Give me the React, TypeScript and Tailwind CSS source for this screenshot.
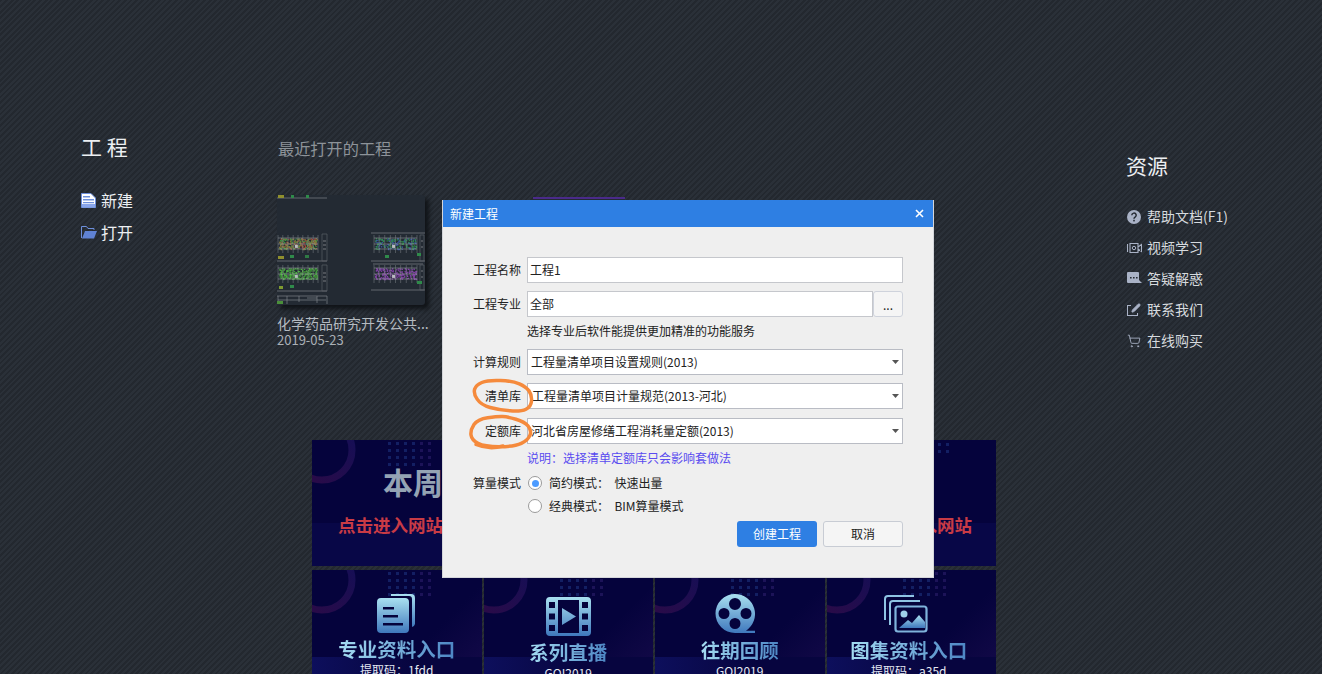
import type { ReactNode } from 'react';
import { Pencil, ShoppingCart } from 'lucide-react';

// seeded noise so the CAD thumbnail stays the same between renders
function noise(seed: number, count: number, x: number, y: number, w: number, h: number) {
  const out: { x: number; y: number }[] = [];
  let s = seed;
  for (let i = 0; i < count; i++) {
    s = (s * 9301 + 49297) % 233280;
    const a = s / 233280;
    s = (s * 9301 + 49297) % 233280;
    const b = s / 233280;
    out.push({ x: x + a * w, y: y + b * h });
  }
  return out;
}

function Plan({ x, y, w, h, colors, seed }: { x: number; y: number; w: number; h: number; colors: string[]; seed: number }) {
  const verticals = [0, 0.12, 0.25, 0.38, 0.5, 0.62, 0.75, 0.88, 1];
  return (
    <g>
      {colors.map((c, i) =>
        noise(seed + i * 17, 90, x + 1, y + 3, w - 2, h - 7).map((p, j) => (
          <rect key={i + '-' + j} x={p.x} y={p.y} width="1.3" height="1.3" fill={c} />
        ))
      )}
      <path d={'M' + x + ' ' + (y + 3) + 'h' + w + 'M' + x + ' ' + (y + h / 2) + 'h' + w + 'M' + x + ' ' + (y + h - 4) + 'h' + w} stroke="#a9adb2" strokeWidth="0.5" />
      {verticals.map((v) => (
        <path key={v} d={'M' + (x + v * w) + ' ' + y + 'v' + h} stroke="#7f8489" strokeWidth="0.5" />
      ))}
      <rect x={x + w * 0.42} y={y + h * 0.55} width="3" height="3" fill="#b9bcc0" />
    </g>
  );
}

function CadThumb() {
  return (
    <svg viewBox="0 0 148 110" className="w-[148px] h-[110px]">
      <path d="M0 3h50M0 66h50M0 96h50M94 38h54M94 66h54M96 69h50M94 95h54M0 101h50" stroke="#62676e" strokeWidth="1" />
      <path d="M45 39h5v27h-5zM45 70h5v26h-5zM143 40h4v26h-4zM143 70h4v25h-4z" fill="none" stroke="#5a5f66" strokeWidth="0.7" />
      <path d="M46 46h3M46 50h3M46 54h3M46 78h3M46 82h3M46 86h3M144 46h2M144 52h2M144 76h2M144 82h2" stroke="#8d9196" strokeWidth="0.8" />
      <Plan x={1} y={40} w={40} h={18} colors={['#a8453c', '#3f9a45', '#8a7a3c']} seed={11} />
      <Plan x={1} y={70} w={40} h={18} colors={['#3ea83c', '#4dbb3d', '#3e7f3a']} seed={29} />
      <Plan x={97} y={40} w={43} h={18} colors={['#3b5ca8', '#2f8a4a']} seed={53} />
      <Plan x={97} y={70} w={43} h={18} colors={['#8a44b0', '#7d3fa0']} seed={71} />
      {[
        [1, 0, 6, '#8f8f2e'], [14, 0, 3, '#2f8a4a'], [29, 0, 3, '#2f8a4a'], [1, 61, 6, '#8f8f2e'], [13, 60, 4, '#2f8a4a'],
        [28, 60, 4, '#2f7a44'], [2, 91, 4, '#7f9a30'], [13, 90, 4, '#2f8a4a'], [140, 58, 4, '#2f8a4a'], [140, 86, 5, '#2f8a4a'], [108, 60, 4, '#2f8a4a'],
      ].map(([x, y, w, c], i) => (
        <rect key={i} x={x as number} y={y as number} width={w as number} height="3" fill={c as string} />
      ))}
      <path d="M1 101v8M10 101v8M22 101v6M30 103h10M40 101v7M50 101v8M1 105h48" stroke="#80858b" strokeWidth="0.7" />
      <rect x="0" y="106" width="6" height="3" fill="#4a8f3a" />
    </svg>
  );
}

function Grad({ id }: { id: string }) {
  return (
    <defs>
      <linearGradient id={id} x1="0" y1="0" x2="0" y2="1">
        <stop offset="0" stopColor="#a9e0f0" />
        <stop offset="1" stopColor="#3f78bd" />
      </linearGradient>
    </defs>
  );
}

function DocsIcon() {
  return (
    <svg width="40" height="40" viewBox="0 0 40 40">
      <Grad id="g-docs" />
      <path d="M14 1h20a4 4 0 0 1 4 4v26a4 4 0 0 1-3 3V6a3 3 0 0 0-3-3H14z" fill="url(#g-docs)" />
      <path fillRule="evenodd" d="M4 5h24a4 4 0 0 1 4 4v27a4 4 0 0 1-4 4H4a4 4 0 0 1-4-4V9a4 4 0 0 1 4-4zM6 14v2.5h11V14zM6 22v2.5h15V22zM6 30v2.5h20V30z" fill="url(#g-docs)" />
    </svg>
  );
}

function FilmIcon() {
  return (
    <svg width="45" height="39" viewBox="0 0 45 39">
      <Grad id="g-film" />
      <path fillRule="evenodd" d="M4 0h37a4 4 0 0 1 4 4v31a4 4 0 0 1-4 4H4a4 4 0 0 1-4-4V4a4 4 0 0 1 4-4zM3 5v6h6V5zM3 16.5v6h6v-6zM3 28v6h6v-6zM36 5v6h6V5zM36 16.5v6h6v-6zM36 28v6h6v-6zM12 3v33h21V3zM16 11l14 8.5-14 8.5z" fill="url(#g-film)" />
    </svg>
  );
}

function ReelIcon() {
  return (
    <svg width="40" height="41" viewBox="0 0 40 41">
      <Grad id="g-reel" />
      <path fillRule="evenodd" d="M20 0a20 20 0 0 1 11 36.7h9V39H20A19.5 19.5 0 0 1 20 0zM20 4a6 6 0 1 0 0 12 6 6 0 0 0 0-12zM9 14a5.5 5.5 0 1 0 0 11 5.5 5.5 0 0 0 0-11zM31 14a5.5 5.5 0 1 0 0 11 5.5 5.5 0 0 0 0-11zM20 24a5.5 5.5 0 1 0 0 11 5.5 5.5 0 0 0 0-11z" fill="url(#g-reel)" />
    </svg>
  );
}

function GalleryIcon() {
  return (
    <svg width="44" height="38" viewBox="0 0 44 38">
      <Grad id="g-gal" />
      <path d="M30 1H4a3 3 0 0 0-3 3v21M36 6H9a3 3 0 0 0-3 3v21" fill="none" stroke="#8fc4e4" strokeWidth="2" />
      <rect x="11.5" y="11.5" width="31" height="25" rx="2.5" fill="none" stroke="#7fb3dc" strokeWidth="2.2" />
      <circle cx="20" cy="19" r="3.5" fill="#9ed0ea" />
      <path d="M15 33l9-8 4 3 7-8 6 7v6z" fill="url(#g-gal)" />
    </svg>
  );
}

function BannerDecor() {
  const dots = [0, 1, 2, 3, 4, 5].flatMap((c) => [0, 1, 2, 3].map((r) => ({ c, r })));
  return (
    <>
      <svg className="absolute left-0 top-0" width="50" height="50" viewBox="0 0 50 50">
        <defs>
          <linearGradient id="g-ring" x1="1" y1="0" x2="0" y2="1">
            <stop offset="0" stopColor="#120f58" />
            <stop offset="1" stopColor="#2e0a45" />
          </linearGradient>
        </defs>
        <circle cx="10" cy="10" r="30" fill="none" stroke="url(#g-ring)" strokeWidth="7" />
      </svg>
      <svg className="absolute left-[76px] top-0" width="50" height="28" viewBox="0 0 50 28">
        {dots.map((d) => (
          <rect key={d.c + '-' + d.r} x={d.c * 8} y={d.r * 7 + 2} width="3" height="3" fill={d.c > 3 ? '#1c1358' : '#131f63'} />
        ))}
      </svg>
    </>
  );
}

const tiles: { title: string; sub: string; icon: ReactNode; mt: string; shift: string; iconShift: string }[] = [
  { title: '专业资料入口', sub: '提取码：1fdd', icon: <DocsIcon />, mt: 'mt-[23px]', shift: '', iconShift: '' },
  { title: '系列直播', sub: 'GOI2019', icon: <FilmIcon />, mt: 'mt-[26px]', shift: '', iconShift: '' },
  { title: '往期回顾', sub: 'GOI2019', icon: <ReelIcon />, mt: 'mt-[24px]', shift: '', iconShift: 'mr-[9px]' },
  { title: '图集资料入口', sub: '提取码：a35d', icon: <GalleryIcon />, mt: 'mt-[24px]', shift: 'pr-[5px]', iconShift: 'mr-[5px]' },
];

function Tile({ title, sub, icon, mt, shift, iconShift }: { title: string; sub: string; icon: ReactNode; mt: string; shift: string; iconShift: string }) {
  return (
    <div className="relative h-[126px] overflow-hidden bg-[linear-gradient(135deg,#05033c_62%,#170b4c_100%)]">
      <BannerDecor />
      <div className="absolute left-0 right-0 top-[87px] h-[40px] bg-[linear-gradient(90deg,#0d0f5c,#07053f_60%)]" />
      <div className={'relative flex flex-col items-center ' + mt + ' ' + shift}>
        <div className={'h-[40px] flex items-center ' + iconShift}>{icon}</div>
        <div className="mt-[2px] h-[28px] leading-[28px] text-[19.5px] font-bold whitespace-nowrap bg-linear-to-r from-[#a4dcf2] to-[#4d86c4] bg-clip-text text-transparent">
          {title}
        </div>
        <div className="text-[12px] leading-[14px] text-[#e4e8f2] whitespace-nowrap">{sub}</div>
      </div>
    </div>
  );
}

function FileIcon() {
  return (
    <svg width="15" height="15" viewBox="0 0 15 15">
      <path d="M0.5 0.5h9.5l4.500 4.500v9.500H0.5z" fill="#fff" stroke="#6d8fdc" />
      <path d="M1 11h13v3.5H1z" fill="#8aa6ea" />
      <path d="M2 3h7v1.5H2zM2 6h11v1.5H2zM2 9h11v1.2H2z" fill="#6d8fdc" />
    </svg>
  );
}

function FolderIcon() {
  return (
    <svg width="16" height="13" viewBox="0 0 16 13">
      <path d="M0.5 12V0.5h5l1.5 2h6v1.5" fill="none" stroke="#6d8fdc" />
      <path d="M1 12.5L4 5h12l-3 7.5z" fill="#5f82d4" />
    </svg>
  );
}

function HelpIcon() {
  return (
    <svg width="14" height="14" viewBox="0 0 14 14">
      <circle cx="7" cy="7" r="7" fill="#a9b2c6" />
      <path d="M4.8 5.3a2.2 2.2 0 1 1 3.3 1.9c-.7.4-1.1.8-1.1 1.5" fill="none" stroke="#252b33" strokeWidth="1.5" />
      <rect x="6.2" y="9.8" width="1.6" height="1.6" fill="#252b33" />
    </svg>
  );
}

function VideoIcon() {
  return (
    <svg width="15" height="12" viewBox="0 0 15 12">
      <path d="M0.5 2v8M3 1.5h8v9H3zM11 5l3.5-2.5v7L11 7" fill="none" stroke="#a9b2c6" strokeWidth="1.1" />
      <circle cx="7" cy="6" r="1.7" fill="none" stroke="#a9b2c6" />
    </svg>
  );
}

function ChatIcon() {
  return (
    <svg width="15" height="13" viewBox="0 0 15 13">
      <path d="M1 0h10a1 1 0 0 1 1 1v7l3 3H1a1 1 0 0 1-1-1V1a1 1 0 0 1 1-1z" fill="#a9b2c6" />
      <path d="M3 5h1.6v1.6H3zM6 5h1.6v1.6H6zM9 5h1.6v1.6H9z" fill="#252b33" />
    </svg>
  );
}

function ContactIcon() {
  return (
    <span className="relative block w-[14px] h-[14px]">
      <span className="absolute left-0 top-[2px] w-[11px] h-[11px] border border-[#a9b2c6]" />
      <Pencil size={10} fill="#a9b2c6" className="absolute right-0 top-0 text-[#a9b2c6] bg-[#252b33]" />
    </span>
  );
}

const resources: { label: string; icon: ReactNode }[] = [
  { label: '帮助文档(F1)', icon: <HelpIcon /> },
  { label: '视频学习', icon: <VideoIcon /> },
  { label: '答疑解惑', icon: <ChatIcon /> },
  { label: '联系我们', icon: <ContactIcon /> },
  { label: '在线购买', icon: <ShoppingCart size={14} strokeWidth={1.5} className="text-[#a9b2c6]" /> },
];

function Caret() {
  return (
    <svg width="7" height="4" viewBox="0 0 7 4" className="shrink-0">
      <path d="M0 0h7L3.5 4z" fill="#555" />
    </svg>
  );
}

function Row({ label, children, className = '' }: { label?: string; children: ReactNode; className?: string }) {
  return (
    <div className={'flex items-center gap-[6px] ' + className}>
      <span className="w-[48px] shrink-0 text-right whitespace-nowrap">{label}</span>
      {children}
    </div>
  );
}

function SelectBox({ value, pad = 'pl-[4px]' }: { value: string; pad?: string }) {
  return (
    <div className={'flex-1 h-[26px] flex items-center justify-between bg-white border border-[#b9bcc4] pr-[3px] ' + pad}>
      <span className="whitespace-nowrap">{value}</span>
      <Caret />
    </div>
  );
}

function Radio({ on, children, className = '' }: { on?: boolean; children: ReactNode; className?: string }) {
  return (
    <div className={'flex items-center h-[20px] ' + className}>
      <span className="w-[14px] h-[14px] rounded-full border border-[#9a9a9a] bg-white flex items-center justify-center ml-[1px]">
        {on && <span className="w-[7px] h-[7px] rounded-full bg-[#4c9bff]" />}
      </span>
      <span className="ml-[7px] whitespace-pre">{children}</span>
    </div>
  );
}

// builds a freehand looking closed loop through the points
function loop(pts: number[][]) {
  const mid = (a: number[], b: number[]) => [(a[0] + b[0]) / 2, (a[1] + b[1]) / 2];
  const start = mid(pts[0], pts[1]);
  let d = 'M' + start[0] + ' ' + start[1];
  for (let i = 1; i <= pts.length; i++) {
    const p = pts[i % pts.length];
    const m = mid(p, pts[(i + 1) % pts.length]);
    d += ' Q' + p[0] + ' ' + p[1] + ' ' + m[0] + ' ' + m[1];
  }
  return d;
}

function Dialog() {
  return (
    <div className="absolute left-[442px] top-[200px] w-[492px] h-[378px] bg-[#efefef] border-x border-b border-[#d4d6da] text-[12px] text-[#222]">
      <div className="h-[27px] bg-[#2e7fe3] flex items-center justify-between pl-[7px] pr-[9px] text-white">
        <span>新建工程</span>
        <svg width="9" height="9" viewBox="0 0 9 9">
          <path d="M1 1l7 7M8 1l-7 7" stroke="#fff" strokeWidth="1.6" />
        </svg>
      </div>
      <div className="flex flex-col pl-[30px] pr-[30px] pt-[30px]">
        <Row label="工程名称">
          <div className="flex-1 h-[26px] leading-[24px] bg-white border border-[#c5c7cc] pl-[2px]">工程1</div>
        </Row>
        <Row label="工程专业" className="mt-[8px]">
          <div className="flex-1 h-[26px] leading-[24px] bg-white border border-[#c5c7cc] pl-[2px]">全部</div>
          <div className="w-[30px] h-[26px] -ml-[6px] rounded-[3px] border border-[#cfd3dc] bg-[#f5f5f5] text-center leading-[26px]">...</div>
        </Row>
        <div className="mt-[4px] h-[20px] leading-[20px] ml-[54px]">选择专业后软件能提供更加精准的功能服务</div>
        <Row label="计算规则" className="mt-[8px]">
          <SelectBox value="工程量清单项目设置规则(2013)" pad="pl-[3px]" />
        </Row>
        <Row label="清单库" className="mt-[8px]">
          <SelectBox value="工程量清单项目计量规范(2013-河北)" />
        </Row>
        <Row label="定额库" className="mt-[9px]">
          <SelectBox value="河北省房屋修缮工程消耗量定额(2013)" pad="pl-[3px]" />
        </Row>
        <div className="mt-[4px] h-[20px] leading-[20px] ml-[54px] text-[#5a4cf0]">说明：选择清单定额库只会影响套做法</div>
        <Row label="算量模式" className="mt-[5px]">
          <Radio on>简约模式：  快速出量</Radio>
        </Row>
        <Radio className="mt-[3px] ml-[54px]">经典模式：  BIM算量模式</Radio>
        <div className="mt-[5px] flex justify-end gap-[6px]">
          <div className="w-[80px] h-[26px] rounded-[3px] bg-[#2e7fe3] text-white text-center leading-[26px]">创建工程</div>
          <div className="w-[80px] h-[26px] rounded-[3px] bg-[#f5f5f5] border border-[#c8ccd4] text-center leading-[24px]">取消</div>
        </div>
      </div>
      <svg className="absolute left-0 top-0 pointer-events-none" width="120" height="260" viewBox="0 0 120 260" fill="none" stroke="#f58a3c" strokeWidth="3.5" strokeLinecap="round">
        <path d={loop([[44.7, 180], [33, 185], [30.3, 193.3], [38, 205], [56.3, 210], [78, 211.7], [88, 206.7], [89, 195], [83, 186.7], [69.7, 181]])} />
        <path d={loop([[54.7, 216.3], [34.7, 219], [27.3, 230], [28.7, 240], [41.3, 246.7], [71.3, 246.7], [85.3, 240], [88.7, 230], [81.3, 221.7], [64.7, 216.7]])} />
        <path d="M33 244.500Q46 250 60 246" />
      </svg>
    </div>
  );
}

export default function App() {
  return (
    <div className="relative w-full h-[674px] overflow-hidden flex font-['Noto_Sans_CJK_SC','Liberation_Sans',sans-serif] bg-[repeating-linear-gradient(135deg,#23282f_0px,#23282f_2px,#2a3038_2px,#2a3038_4px)]">
      {/* left column */}
      <div className="w-[277px] shrink-0 pl-[81px] pt-[132px]">
        <div className="h-[28px] leading-[28px] text-[21px] text-[#eceff2] whitespace-pre">工 程</div>
        <div className="mt-[24px] flex flex-col text-[16px] text-[#eceff2]">
          <div className="h-[32px] flex items-center gap-[5px]"><FileIcon /><span>新建</span></div>
          <div className="h-[32px] flex items-center gap-[4px]"><FolderIcon /><span>打开</span></div>
        </div>
      </div>

      {/* recent projects and banners */}
      <div className="w-[849px] shrink-0 pt-[136px]">
        <div className="h-[24px] leading-[24px] text-[16.2px] ml-[1px] text-[#8d9399]">最近打开的工程</div>
        <div className="mt-[35px] h-[152px] flex">
          <div className="w-[152px]">
            <div className="w-[148px] h-[110px] bg-[#232a33] rounded-br-[3px] rounded-tr-[3px] shadow-[4px_4px_4px_#111418]">
              <CadThumb />
            </div>
            <div className="mt-[8px] h-[20px] leading-[20px] text-[14px] text-[#b4bac0] whitespace-nowrap">化学药品研究开发公共...</div>
            <div className="h-[14px] leading-[14px] text-[13px] text-[#aab0b6]">2019-05-23</div>
          </div>
          <div className="ml-[104px] w-[92px] h-[110px] mt-[2px] bg-[#232a33] border-t-2 border-[#4a2a8a]" />
        </div>
        <div className="mt-[93px] ml-[35px] w-[684px] flex flex-col gap-[4px]">
          <div className="relative h-[126px] overflow-hidden bg-[linear-gradient(180deg,#05033c_66%,#080747_66%,#080747_100%)]">
            <BannerDecor />
            <svg className="absolute left-[618px] top-0" width="30" height="28" viewBox="0 0 30 28">
              <path d="M0 3h3v3H0zM8 3h3v3H8zM16 3h3v3h-3zM0 10h3v3H0zM8 10h3v3H8zM16 10h3v3h-3z" fill="#131f63" />
            </svg>
            <div className="absolute left-[71px] top-[19px] text-[30px] font-bold text-[#94a3b4]">本周</div>
            <div className="absolute left-[26px] right-[24px] top-[72px] flex justify-between text-[17.5px] font-bold text-[#c93b45]">
              <span>点击进入网站</span>
              <span>点击进入网站</span>
            </div>
          </div>
          <div className="grid grid-cols-4 gap-[2px]">
            {tiles.map((t) => (
              <Tile key={t.title} title={t.title} sub={t.sub} icon={t.icon} mt={t.mt} shift={t.shift} iconShift={t.iconShift} />
            ))}
          </div>
        </div>
      </div>

      {/* resources */}
      <div className="flex-1 pt-[151px]">
        <div className="h-[28px] leading-[28px] text-[21px] text-[#eceff2]">资源</div>
        <div className="mt-[22px] flex flex-col text-[14px] text-[#d6dade]">
          {resources.map((r) => (
            <div key={r.label} className="h-[31px] flex items-center">
              <span className="w-[21px] shrink-0 pl-[1px] flex items-center">{r.icon}</span>
              <span className="whitespace-nowrap">{r.label}</span>
            </div>
          ))}
        </div>
      </div>

      <Dialog />
    </div>
  );
}
